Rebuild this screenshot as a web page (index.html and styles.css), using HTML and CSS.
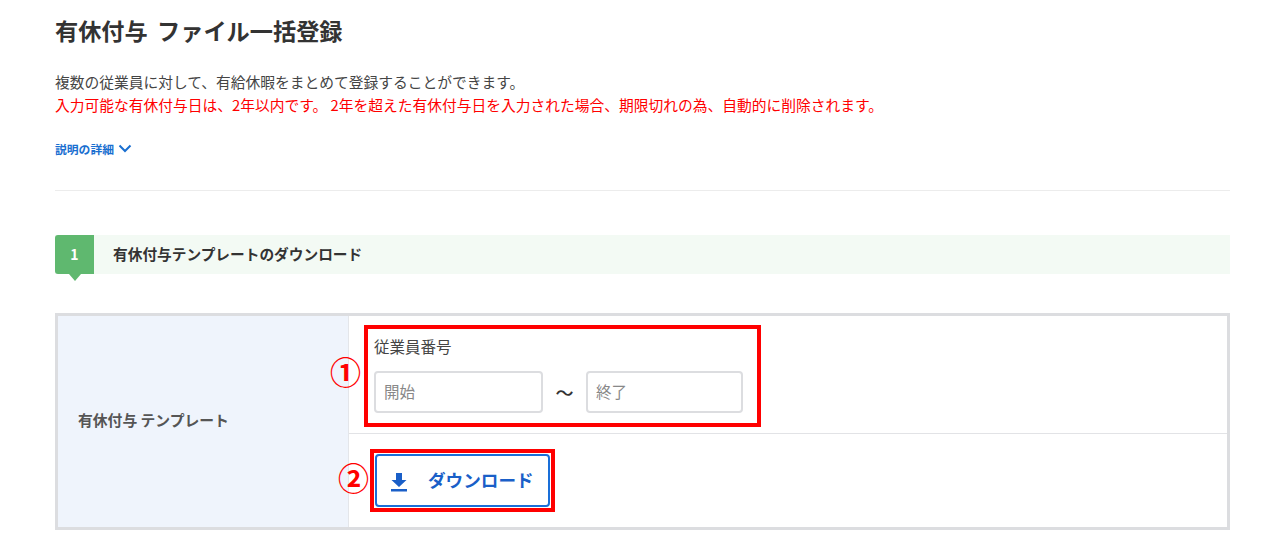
FILE: index.html
```html
<!DOCTYPE html>
<html lang="ja">
<head>
  <meta charset="UTF-8" />
  <title>有休付与 ファイル一括登録</title>
  <link rel="stylesheet" href="styles.css">
</head>
<body>
  <h1 class="page-title">有休付与 ファイル一括登録</h1>

  <div class="intro">
    <p>複数の従業員に対して、有給休暇をまとめて登録することができます。</p>
    <p class="warning">入力可能な有休付与日は、2年以内です。 2年を超えた有休付与日を入力された場合、期限切れの為、自動的に削除されます。</p>
  </div>

  <a class="detail-link" href="#">説明の詳細
    <svg width="14" height="9" viewBox="0 0 14 9"><path d="M1.500 1.500 7 7l5.500-5.500" fill="none" stroke="#1a6fd0" stroke-width="2"/></svg>
  </a>

  <hr class="divider">

  <!-- Step 1 -->
  <div class="step">
    <div class="step-num">1</div>
    <div class="step-title">有休付与テンプレートのダウンロード</div>
  </div>

  <div class="form-table">
    <div class="form-label">有休付与 テンプレート</div>
    <div class="form-body">
      <div class="form-row range-row">
        <div class="range-label">従業員番号</div>
        <div class="range-inputs">
          <input class="range-input start" type="text" placeholder="開始" />
          <span class="tilde">〜</span>
          <input class="range-input end" type="text" placeholder="終了" />
        </div>
        <div class="mark mark-range"></div>
        <span class="mark-num num-range">①</span>
      </div>
      <div class="form-row button-row">
        <button class="download-btn">
          <svg class="download-icon" width="20" height="20" viewBox="0 0 20 20"><path d="M7 1h6v7h4.500L10 15 2.500 8H7zM2 17h16v2.500H2z" fill="#1a5fc8"/></svg>
          ダウンロード
        </button>
        <div class="mark mark-button"></div>
        <span class="mark-num num-button">②</span>
      </div>
    </div>
  </div>
</body>
</html>
```

FILE: styles.css
```css
* {
  box-sizing: border-box;
  margin: 0;
  padding: 0;
}

body {
  font-family: "Noto Sans CJK JP", "Noto Sans", sans-serif;
  color: #333;
  background: #fff;
  padding: 14px 50px 0 55px;
  height: 556px;
  overflow: hidden;
}

.page-title {
  font-size: 23.2px;
  line-height: 32px;
  font-weight: 700;
  word-spacing: 4px;
  color: #333;
}

.intro {
  margin-top: 24px;
  font-size: 14.75px;
  line-height: 23px;
  color: #444;
}

.warning {
  color: #ff0000;
}

.detail-link {
  display: flex;
  align-items: center;
  gap: 4px;
  margin-top: 23px;
  height: 18px;
  font-size: 11.8px;
  font-weight: 700;
  color: #1a6fd0;
  text-decoration: none;
}

.divider {
  border: none;
  border-top: 1px solid #ececec;
  margin-top: 33px;
}

.step {
  display: flex;
  align-items: center;
  height: 39px;
  margin-top: 44px;
  background: #f3faf4;
}

.step-num {
  position: relative;
  width: 39px;
  height: 39px;
  background: #5fb86f;
  border-radius: 3px 0 0 3px;
  color: #fff;
  font-size: 14px;
  font-weight: 700;
  line-height: 39px;
  text-align: center;
}

.step-num::after {
  content: "";
  position: absolute;
  top: 39px;
  left: 14px;
  border-top: 7px solid #5fb86f;
  border-left: 6px solid transparent;
  border-right: 6px solid transparent;
}

.step-title {
  margin-left: 19px;
  margin-top: -2px;
  font-size: 14.7px;
  font-weight: 700;
  color: #333;
}

.form-table {
  display: flex;
  margin-top: 39px;
  height: 217px;
  border: 3px solid #dcdde0;
}

.form-label {
  display: flex;
  align-items: center;
  width: 291px;
  padding-left: 20px;
  padding-bottom: 4px;
  background: #eff4fc;
  border-right: 1px solid #e4e6ea;
  font-size: 14.8px;
  font-weight: 700;
  color: #555;
}

.form-body {
  flex: 1;
  display: flex;
  flex-direction: column;
}

.form-row {
  position: relative;
  padding-left: 25px;
}

.range-row {
  height: 118px;
  border-bottom: 1px solid #e2e3e6;
  padding-top: 19px;
}

.range-label {
  font-size: 15.5px;
  line-height: 22px;
  color: #444;
}

.range-inputs {
  display: flex;
  align-items: center;
  margin-top: 14px;
}

.range-input {
  height: 42px;
  border: 2px solid #dcdde0;
  border-radius: 4px;
  padding: 0 8px 3px;
  font-family: inherit;
  font-size: 15.5px;
}

.range-input::placeholder {
  color: #888;
}

.start {
  width: 169px;
}

.end {
  width: 157px;
}

.tilde {
  width: 43px;
  text-align: center;
  font-size: 18px;
  font-weight: 500;
  color: #333;
}

.button-row {
  flex: 1;
  padding-top: 20px;
}

.download-btn {
  display: flex;
  align-items: center;
  gap: 19px;
  width: 175px;
  height: 53px;
  margin-left: 1px;
  padding: 0 0 3px 12px;
  background: #fff;
  border: 2px solid #1a6fd8;
  border-radius: 4px;
  font-family: inherit;
  font-size: 17.6px;
  font-weight: 700;
  color: #1a5fc8;
}

.download-icon {
  margin-top: 5px;
}

/* red annotations laid over the form */
.mark {
  position: absolute;
  border: 4px solid #ff0000;
}

.mark-range {
  left: 15px;
  top: 9px;
  width: 397px;
  height: 102px;
}

.mark-button {
  left: 21px;
  top: 15px;
  width: 185px;
  height: 63px;
}

.mark-num {
  position: absolute;
  font-size: 31px;
  line-height: 36px;
  font-weight: 700;
  color: #ff0000;
}

.num-range {
  left: -19px;
  top: 37px;
}

.num-button {
  left: -11px;
  top: 25px;
}
```
